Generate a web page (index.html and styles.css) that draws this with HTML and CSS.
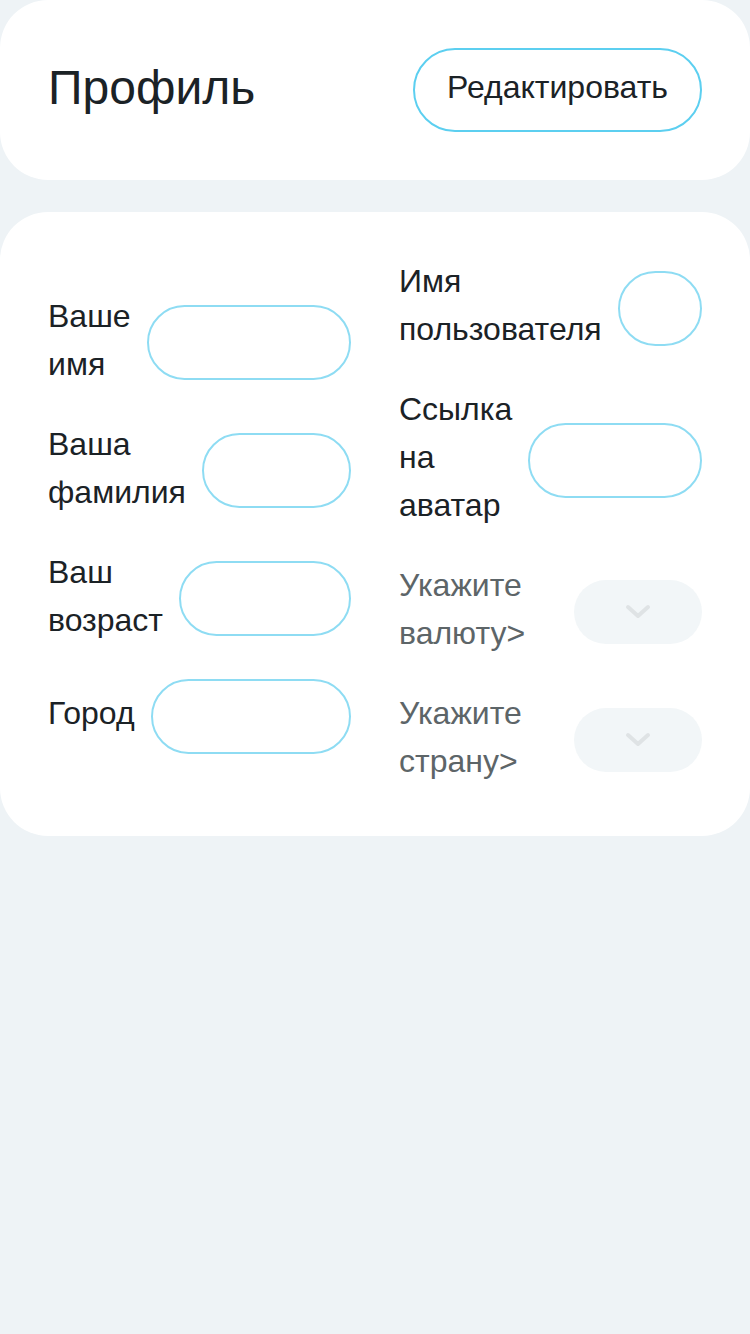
FILE: index.html
```html
<!DOCTYPE html>
<html lang="ru">
<head>
<meta charset="utf-8">
<title>Профиль</title>
<link rel="stylesheet" href="styles.css">
</head>
<body>
  <header class="card head">
    <h1 class="title">Профиль</h1>
    <button class="edit-btn" type="button">Редактировать</button>
  </header>

  <section class="card form">
    <div class="col">
      <div class="row"><label class="lbl">Ваше имя</label><span class="field"></span></div>
      <div class="row"><label class="lbl">Ваша фамилия</label><span class="field"></span></div>
      <div class="row"><label class="lbl">Ваш возраст</label><span class="field"></span></div>
      <div class="row"><label class="lbl">Город</label><span class="field"></span></div>
    </div>
    <div class="col">
      <div class="row"><label class="lbl">Имя пользователя</label><span class="field"></span></div>
      <div class="row"><label class="lbl">Ссылка на аватар</label><span class="field"></span></div>
      <div class="row spread"><label class="lbl muted">Укажите валюту&gt;</label>
        <span class="select"><svg width="28" height="16" viewBox="0 0 28 16"><polyline points="4,3 14,12 24,3" fill="none" stroke="#dfe3e5" stroke-width="4" stroke-linecap="round" stroke-linejoin="round"/></svg></span>
      </div>
      <div class="row spread"><label class="lbl muted">Укажите страну&gt;</label>
        <span class="select"><svg width="28" height="16" viewBox="0 0 28 16"><polyline points="4,3 14,12 24,3" fill="none" stroke="#dfe3e5" stroke-width="4" stroke-linecap="round" stroke-linejoin="round"/></svg></span>
      </div>
    </div>
  </section>
</body>
</html>
```

FILE: styles.css
```css
* { box-sizing: border-box; }
html, body { margin: 0; padding: 0; }
body {
  background: #eef3f6;
  font-family: "Liberation Sans", Arial, sans-serif;
  color: #1b2226;
  width: 750px;
  min-height: 1334px;
}
.card {
  background: #ffffff;
  border-radius: 48px;
}
.head {
  height: 180px;
  padding: 0 48px;
  display: flex;
  align-items: center;
  justify-content: space-between;
  margin-bottom: 32px;
}
.title {
  margin: -2px 0 2px;
  font-size: 48px;
  font-weight: 400;
  line-height: 1;
}
.edit-btn {
  font-family: "Liberation Sans", Arial, sans-serif;
  font-size: 32px;
  color: #1b2226;
  background: #fff;
  border: 2px solid #5ccff0;
  border-radius: 999px;
  width: 289px;
  height: 84px;
  padding: 0 0 6px;
}
.form {
  padding: 48px;
  display: flex;
  align-items: center;
  gap: 48px;
}
.col {
  flex: 1 1 0;
  display: flex;
  flex-direction: column;
  gap: 32px;
}
.row {
  display: flex;
  align-items: center;
  gap: 16px;
}
.lbl {
  width: min-content;
  flex: none;
  font-size: 32px;
  line-height: 48px;
  margin: -3px 0 3px;
}
.muted { color: #5d6568; }
.field {
  flex: 1 1 auto;
  height: 75px;
  border: 2px solid #8edcf3;
  border-radius: 999px;
}
.spread { justify-content: space-between; }
.select {
  width: 128px;
  height: 64px;
  border-radius: 999px;
  background: #f2f6f8;
  display: flex;
  align-items: center;
  justify-content: center;
}
```
